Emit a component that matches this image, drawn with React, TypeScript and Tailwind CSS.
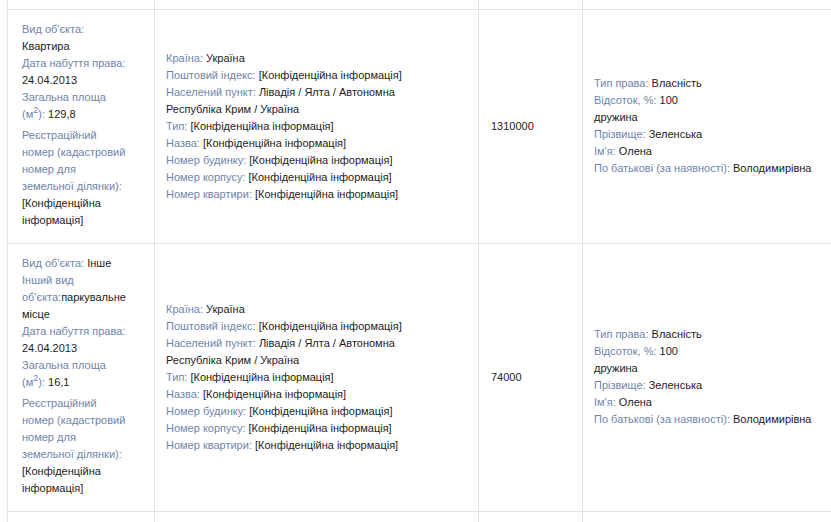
import React from 'react';

const Label: React.FC<{ children: React.ReactNode }> = ({ children }) => (
  <span className="text-[#6f84aa]">{children}</span>
);

const AddressBlock = () => (
  <div className="max-w-[262px]">
    <div><Label>Країна:</Label> Україна</div>
    <div><Label>Поштовий індекс:</Label> [Конфіденційна інформація]</div>
    <div><Label>Населений пункт:</Label> Лівадія / Ялта / Автономна Республіка Крим / Україна</div>
    <div><Label>Тип:</Label> [Конфіденційна інформація]</div>
    <div><Label>Назва:</Label> [Конфіденційна інформація]</div>
    <div><Label>Номер будинку:</Label> [Конфіденційна інформація]</div>
    <div><Label>Номер корпусу:</Label> [Конфіденційна інформація]</div>
    <div><Label>Номер квартири:</Label> [Конфіденційна інформація]</div>
  </div>
);

const OwnerBlock = () => (
  <div>
    <div><Label>Тип права:</Label> Власність</div>
    <div><Label>Відсоток, %:</Label> 100</div>
    <div>дружина</div>
    <div><Label>Прізвище:</Label> Зеленська</div>
    <div><Label>Ім'я:</Label> Олена</div>
    <div><Label>По батькові (за наявності):</Label> Володимирівна</div>
  </div>
);

const Area: React.FC<{ value: string }> = ({ value }) => (
  <div>
    <Label>
      Загальна площа (м<span className="relative -top-[5px] text-[9px] leading-none">2</span>):
    </Label>{' '}
    {value}
  </div>
);

const Registry = () => (
  <div className="mt-1">
    <Label>Реєстраційний номер (кадастровий номер для земельної ділянки):</Label>
    <div>[Конфіденційна інформація]</div>
  </div>
);

const rows = [
  {
    object: (
      <div className="w-[108px]">
        <div><Label>Вид об'єкта:</Label> Квартира</div>
        <div><Label>Дата набуття права:</Label> 24.04.2013</div>
        <Area value="129,8" />
        <Registry />
      </div>
    ),
    cost: '1310000',
  },
  {
    object: (
      <div className="w-[108px]">
        <div><Label>Вид об'єкта:</Label> Інше</div>
        <div><Label>Інший вид об'єкта:</Label>паркувальне місце</div>
        <div><Label>Дата набуття права:</Label> 24.04.2013</div>
        <Area value="16,1" />
        <Registry />
      </div>
    ),
    cost: '74000',
  },
];

const td = 'border border-[#dfe3e8] align-middle';

export default function App() {
  return (
    <div
      className="w-[831px] h-[522px] overflow-hidden bg-white pl-[7px] text-[11px] leading-[17px] text-[#1c1c1c]"
      style={{ fontFamily: '"Liberation Sans", Arial, sans-serif' }}
    >
      <table className="border-collapse table-fixed w-[880px]">
        <colgroup>
          <col className="w-[147px]" />
          <col className="w-[324px]" />
          <col className="w-[104px]" />
          <col />
        </colgroup>
        <tbody>
          <tr className="h-[9px]">
            <td className={`${td} border-t-0`} />
            <td className={`${td} border-t-0`} />
            <td className={`${td} border-t-0`} />
            <td className={`${td} border-t-0`} />
          </tr>
          {rows.map((r, i) => (
            <tr key={i}>
              <td className={`${td} pl-[14px] pr-3 pt-[11px] pb-[14px]`}>{r.object}</td>
              <td className={`${td} px-[11px] py-3`}>
                <AddressBlock />
              </td>
              <td className={`${td} px-3 py-3`}>{r.cost}</td>
              <td className={`${td} px-[11px] py-3`}>
                <OwnerBlock />
              </td>
            </tr>
          ))}
          <tr className="h-[40px]">
            <td className={td} />
            <td className={td} />
            <td className={td} />
            <td className={td} />
          </tr>
        </tbody>
      </table>
    </div>
  );
}
